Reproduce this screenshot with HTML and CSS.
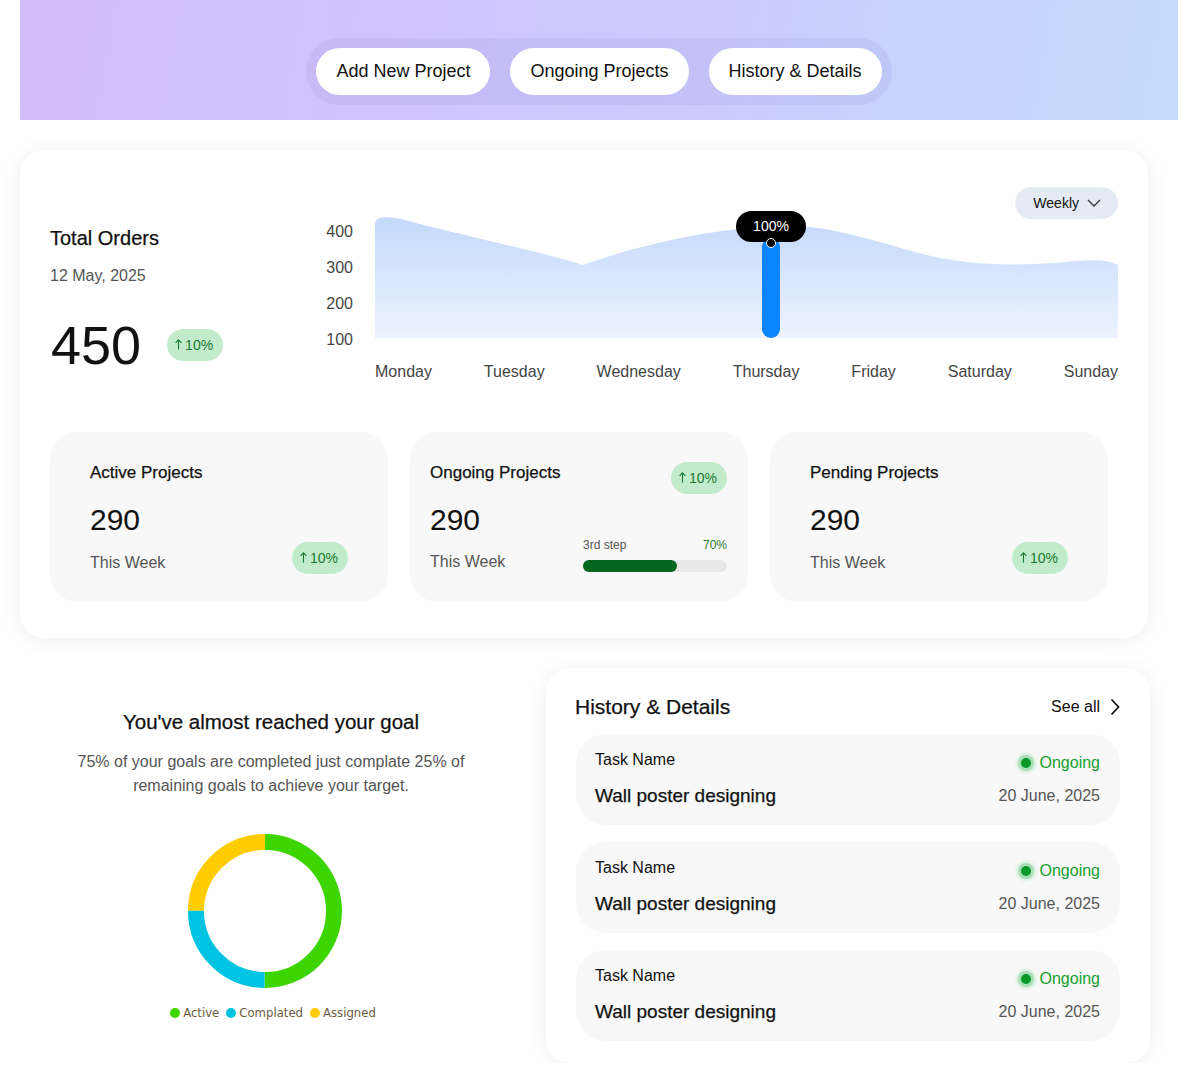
FILE: index.html
```html
<!DOCTYPE html>
<html lang="en">
<head>
  <meta charset="UTF-8" />
  <meta name="viewport" content="width=device-width, initial-scale=1.0" />
  <title>Projects Dashboard</title>
  <link rel="stylesheet" href="styles.css">
</head>
<body>
  <header class="banner">
    <nav class="pill-group">
      <a href="#" class="pill">Add New Project</a>
      <a href="#" class="pill">Ongoing Projects</a>
      <a href="#" class="pill">History &amp; Details</a>
    </nav>
  </header>

  <section class="main-card">
    <div class="overview">
      <div class="orders-info">
        <h2 class="medium">Total Orders</h2>
        <p class="date">12 May, 2025</p>
        <div class="orders-total">
          <span class="big-num">450</span>
          <span class="badge"><svg class="up" width="7" height="11" viewBox="0 0 7 11"><path d="M3.5 10.5V1M0.6 3.8L3.5 0.9 6.4 3.8" fill="none" stroke="currentColor" stroke-width="1.1"/></svg>10%</span>
        </div>
      </div>

      <div class="y-axis">
        <span>400</span><span>300</span><span>200</span><span>100</span>
      </div>

      <div class="chart">
        <div class="chart-top">
          <button class="dropdown">Weekly
            <svg width="14" height="8" viewBox="0 0 14 8"><path d="M1 1l6 6 6-6" fill="none" stroke="#333" stroke-width="1.3"/></svg>
          </button>
        </div>
        <div class="plot">
          <svg class="area" width="743" height="128" viewBox="0 0 743 128">
            <defs>
              <linearGradient id="areaFill" x1="0" y1="0" x2="0" y2="1">
                <stop offset="0" stop-color="#c4d9fb"/>
                <stop offset="1" stop-color="#edf3fe"/>
              </linearGradient>
            </defs>
            <path d="M0,128 V14 C0,6 14,6 30,10 C80,24 160,40 208,55 C260,36 330,20 396,16 C440,13 480,25 540,42 C580,53 620,57 680,53 C710,50 730,48 743,55 V128 Z" fill="url(#areaFill)"/>
          </svg>
          <!-- highlighted day -->
          <div class="bar"></div>
          <div class="tip">100%</div>
          <div class="tip-dot"></div>
        </div>
        <div class="days">
          <span>Monday</span><span>Tuesday</span><span>Wednesday</span><span>Thursday</span><span>Friday</span><span>Saturday</span><span>Sunday</span>
        </div>
      </div>
    </div>

    <div class="stats">
      <div class="stat">
        <div class="stat-head"><h3 class="medium">Active Projects</h3></div>
        <div class="stat-num">290</div>
        <div class="stat-foot">
          <span class="week">This Week</span>
          <span class="badge"><svg class="up" width="7" height="11" viewBox="0 0 7 11"><path d="M3.5 10.5V1M0.6 3.8L3.5 0.9 6.4 3.8" fill="none" stroke="currentColor" stroke-width="1.1"/></svg>10%</span>
        </div>
      </div>
      <div class="stat stat-tight">
        <div class="stat-head"><h3 class="medium">Ongoing Projects</h3><span class="badge"><svg class="up" width="7" height="11" viewBox="0 0 7 11"><path d="M3.5 10.5V1M0.6 3.8L3.5 0.9 6.4 3.8" fill="none" stroke="currentColor" stroke-width="1.1"/></svg>10%</span></div>
        <div class="stat-num">290</div>
        <div class="stat-foot">
          <span class="week">This Week</span>
          <div class="progress">
            <div class="progress-labels"><span>3rd step</span><span class="pct">70%</span></div>
            <div class="track"><div class="fill" style="width: 65%"></div></div>
          </div>
        </div>
      </div>
      <div class="stat">
        <div class="stat-head"><h3 class="medium">Pending Projects</h3></div>
        <div class="stat-num">290</div>
        <div class="stat-foot">
          <span class="week">This Week</span>
          <span class="badge"><svg class="up" width="7" height="11" viewBox="0 0 7 11"><path d="M3.5 10.5V1M0.6 3.8L3.5 0.9 6.4 3.8" fill="none" stroke="currentColor" stroke-width="1.1"/></svg>10%</span>
        </div>
      </div>
    </div>
  </section>

  <div class="bottom">
    <section class="goal">
      <h2 class="medium">You've almost reached your goal</h2>
      <p>75% of your goals are completed just complate 25% of remaining goals to achieve your target.</p>
      <svg class="donut" width="156" height="156" viewBox="0 0 156 156">
        <g transform="rotate(-90 78 78)" fill="none" stroke-width="16">
          <circle cx="78" cy="78" r="69" stroke="#3cd500" stroke-dasharray="216.8 216.8" stroke-dashoffset="0"/>
          <circle cx="78" cy="78" r="69" stroke="#00c3e1" stroke-dasharray="108.4 325.1" stroke-dashoffset="-216.8"/>
          <circle cx="78" cy="78" r="69" stroke="#ffcc00" stroke-dasharray="108.4 325.1" stroke-dashoffset="-325.2"/>
        </g>
      </svg>
      <div class="legend">
        <span><i class="dot green"></i>Active</span>
        <span><i class="dot cyan"></i>Complated</span>
        <span><i class="dot yellow"></i>Assigned</span>
      </div>
    </section>

    <section class="history">
      <div class="history-head">
        <h2 class="medium">History &amp; Details</h2>
        <a href="#" class="see-all">See all
          <svg width="10" height="18" viewBox="0 0 10 18"><path d="M1.5 1.5l7 7.5-7 7.5" fill="none" stroke="#111" stroke-width="1.8"/></svg>
        </a>
      </div>
      <div class="task">
        <div class="task-row"><span class="task-label">Task Name</span><span class="status"><i></i>Ongoing</span></div>
        <div class="task-row"><span class="task-name medium">Wall poster designing</span><span class="task-date">20 June, 2025</span></div>
      </div>
      <div class="task">
        <div class="task-row"><span class="task-label">Task Name</span><span class="status"><i></i>Ongoing</span></div>
        <div class="task-row"><span class="task-name medium">Wall poster designing</span><span class="task-date">20 June, 2025</span></div>
      </div>
      <div class="task">
        <div class="task-row"><span class="task-label">Task Name</span><span class="status"><i></i>Ongoing</span></div>
        <div class="task-row"><span class="task-name medium">Wall poster designing</span><span class="task-date">20 June, 2025</span></div>
      </div>
    </section>
  </div>
</body>
</html>
```

FILE: styles.css
```css
:root {
  --text: #111;
  --muted: #555;
  --card: #f8f8f8;
  --badge-bg: #c2ebcc;
  --badge-text: #1b7a30;
  --green: #14a02e;
}
* { box-sizing: border-box; }
body {
  margin: 0;
  padding-left: 20px;
  font-family: 'Liberation Sans', Arial, sans-serif;
  color: var(--text);
  background: #fff;
}
h2, h3, p { margin: 0; font-weight: normal; }
.medium { -webkit-text-stroke: 0.25px currentColor; }

/* Top banner */
.banner {
  height: 120px;
  background: linear-gradient(100deg, #d4bdfb 0%, #cdc8fc 50%, #c5dbfd 100%);
  display: flex;
  justify-content: center;
  align-items: flex-start;
  padding-top: 38px;
}
.pill-group {
  display: flex;
  gap: 20px;
  padding: 10px;
  border-radius: 34px;
  background: rgba(110, 100, 190, 0.09);
}
.pill {
  height: 47px;
  line-height: 47px;
  padding: 0 20px;
  background: #fff;
  border-radius: 24px;
  color: #111;
  text-decoration: none;
  font-size: 18px;
}

/* Main card */
.main-card {
  width: 1128px;
  margin-top: 30px;
  background: #fff;
  border-radius: 24px;
  box-shadow: 0 2px 22px rgba(0, 0, 0, 0.07);
  padding: 37px 30px 36px;
}
.overview { display: flex; }
.orders-info { width: 270px; padding-top: 39px; }
.orders-info h2 { font-size: 20px; line-height: 24px; }
.date { margin-top: 16px; font-size: 16px; line-height: 20px; color: var(--muted); }
.orders-total { display: flex; align-items: center; gap: 26px; margin-top: 31px; }
.big-num { font-size: 54px; line-height: 56px; margin-left: 1px; }
.badge {
  display: inline-flex;
  align-items: center;
  gap: 3px;
  height: 32px;
  padding: 0 10px 0 8px;
  border-radius: 16px;
  background: var(--badge-bg);
  color: var(--badge-text);
  font-size: 14px;
  white-space: nowrap;
}
.up { display: block; margin-top: -1px; }
.y-axis {
  width: 33px;
  margin-right: 22px;
  padding-top: 27px;
  display: flex;
  flex-direction: column;
  align-items: flex-end;
  font-size: 16px;
  line-height: 36px;
  color: #444;
}
.chart { width: 743px; }
.chart-top { display: flex; justify-content: flex-end; height: 32px; }
.dropdown {
  display: flex;
  align-items: center;
  gap: 8px;
  height: 32px;
  padding: 0 17px 0 18px;
  border: none;
  border-radius: 16px;
  background: #e4ebf5;
  font-family: inherit;
  font-size: 14px;
  color: #111;
  position: relative;
  z-index: 2;
}
.plot { position: relative; height: 128px; margin-top: -9px; }
.area { display: block; }
.bar {
  position: absolute;
  left: 387px;
  top: 28px;
  bottom: 0;
  width: 18px;
  background: #0a84ff;
  border-radius: 9px;
}
.tip {
  position: absolute;
  left: 361px;
  top: 1px;
  width: 70px;
  height: 31px;
  line-height: 31px;
  border-radius: 16px;
  background: #000;
  color: #fff;
  font-size: 14px;
  text-align: center;
}
.tip-dot {
  position: absolute;
  left: 391px;
  top: 28px;
  width: 10px;
  height: 10px;
  border-radius: 50%;
  background: #000;
  border: 1.5px solid #fff;
}
.days {
  display: flex;
  justify-content: space-between;
  margin-top: 23px;
  font-size: 16px;
  line-height: 22px;
  color: #444;
}

/* Stat cards */
.stats {
  display: grid;
  grid-template-columns: repeat(3, 338px);
  gap: 22px;
  margin-top: 49px;
}
.stat {
  height: 170px;
  background: var(--card);
  border-radius: 28px;
  padding: 31px 40px 0;
}
.stat-tight { padding: 30px 21px 0 20px; }
.stat-tight .stat-head h3 { margin-top: 1px; }
.stat-head { display: flex; justify-content: space-between; align-items: flex-start; min-height: 31px; }
.stat-tight .stat-head { min-height: 32px; }
.stat-head h3 { font-size: 17px; line-height: 20px; }
.stat-num { font-size: 30px; line-height: 34px; margin-top: 9px; }
.stat-foot { display: flex; justify-content: space-between; align-items: flex-end; margin-top: 5px; }
.week { font-size: 16px; line-height: 20px; color: var(--muted); margin-bottom: 1px; }
.stat-tight .week { margin-bottom: 0; }
.progress { width: 144px; margin-top: -4px; }
.progress-labels { display: flex; justify-content: space-between; font-size: 12px; line-height: 14px; color: #555; }
.progress-labels .pct { color: var(--badge-text); }
.track { height: 12px; margin-top: 8px; border-radius: 6px; background: #e8e8e8; }
.fill { height: 100%; border-radius: 6px; background: #05661e; }

/* Bottom */
.bottom { display: flex; gap: 24px; margin-top: 30px; align-items: flex-start; }
.goal {
  width: 502px;
  padding-top: 41px;
  text-align: center;
  display: flex;
  flex-direction: column;
  align-items: center;
}
.goal h2 { font-size: 20.5px; line-height: 26px; }
.goal p { margin-top: 15px; width: 400px; font-size: 16px; line-height: 24px; color: var(--muted); }
.donut { margin-top: 35px; margin-right: 12px; display: block; }
.legend {
  display: flex;
  gap: 7px;
  margin-top: 16px;
  margin-left: 4px;
  font-family: 'DejaVu Sans', sans-serif;
  font-size: 11.7px;
  line-height: 16px;
  color: #6a5a3c;
}
.legend span { display: flex; align-items: center; gap: 3px; }
.dot { width: 10px; height: 10px; border-radius: 50%; display: inline-block; }
.dot.green { background: #3cd500; }
.dot.cyan { background: #00c3e1; }
.dot.yellow { background: #ffcc00; }

.history {
  width: 604px;
  background: #fff;
  border-radius: 24px;
  box-shadow: 0 2px 22px rgba(0, 0, 0, 0.07);
  padding: 26px 30px 22px 29px;
}
.history-head { display: flex; justify-content: space-between; align-items: center; margin-bottom: 14px; }
.history-head h2 { font-size: 21px; line-height: 26px; }
.see-all { display: flex; align-items: center; gap: 10px; font-size: 16px; color: #111; text-decoration: none; }
.task {
  margin-left: 1px;
  height: 91px;
  background: var(--card);
  border-radius: 30px;
  padding: 14px 20px 0 19px;
}
.task + .task { margin-top: 17px; }
.task-row { display: flex; justify-content: space-between; align-items: center; }
.task-row + .task-row { margin-top: 12px; }
.task-label { font-size: 16px; line-height: 20px; }
.task-name { font-size: 19px; line-height: 24px; }
.task-date { font-size: 16px; color: var(--muted); }
.status { display: flex; align-items: center; gap: 6px; font-size: 16px; color: var(--green); margin-top: 6px; }
.status i {
  width: 10px;
  height: 10px;
  border-radius: 50%;
  background: #079a2a;
  box-shadow: 0 0 0 3px #a9dfb6, 0 0 3px 5px #d3efda;
  margin-right: 3px;
}
```
